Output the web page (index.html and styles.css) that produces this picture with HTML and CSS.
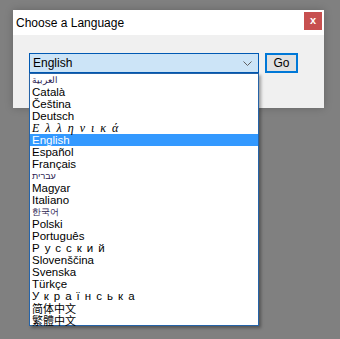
FILE: index.html
```html
<!DOCTYPE html>
<html lang="en">
<head>
    <meta charset="UTF-8">
    <title>Choose a Language</title>
    <link rel="stylesheet" href="styles.css">
</head>
<body>
<div class="dialog">
    <div class="titlebar">
        <span class="title">Choose a Language</span>
        <span class="close">x</span>
    </div>
    <div class="content">
        <div class="controls">
            <div class="combo">
                <span>English</span>
                <svg class="chevron" width="9" height="5" viewBox="0 0 9 5"><polyline points="0.5,0.5 4.5,4.5 8.5,0.5" fill="none" stroke="#606060" stroke-width="1"/></svg>
            </div>
            <div class="go">Go</div>
        </div>
        <ul class="list">
            <li class="small" lang="ar">العربية</li>
            <li>Català</li>
            <li>Čeština</li>
            <li>Deutsch</li>
            <li class="greek">Ελληνικά</li>
            <li class="selected">English</li>
            <li>Español</li>
            <li>Français</li>
            <li class="small" lang="he">עברית</li>
            <li>Magyar</li>
            <li>Italiano</li>
            <li class="small" lang="ko">한국어</li>
            <li>Polski</li>
            <li>Português</li>
            <li class="wide">Русский</li>
            <li>Slovenščina</li>
            <li>Svenska</li>
            <li>Türkçe</li>
            <li class="wide">Українська</li>
            <li class="cjk">简体中文</li>
            <li class="cjk">繁體中文</li>
        </ul>
    </div>
</div>
</body>
</html>
```

FILE: styles.css
```css
html { height: 100%; }
body {
    box-sizing: border-box;
    min-height: 100%;
    margin: 0;
    padding: 10px 0 0 13px;
    background: #808080;
    font-family: 'Liberation Sans', Arial, sans-serif;
    color: #000;
}
.dialog {
    position: relative;
    width: 311px;
    height: 98px;
    background: #f0f0f0;
    box-shadow: 0 0 8px rgba(0, 0, 0, 0.22);
    display: flex;
    flex-direction: column;
}
.titlebar {
    height: 25px;
    background: #fff;
    display: flex;
    align-items: center;
    justify-content: space-between;
    padding: 0 2px 0 3px;
}
.title { font-size: 12px; }
.close {
    width: 18px;
    height: 18px;
    margin-top: -4px;
    background: #c75050;
    color: #fff;
    font-weight: bold;
    font-size: 11px;
    line-height: 16px;
    text-align: center;
}
.content {
    flex: 1;
    padding: 18px 0 0 16px;
}
.controls { display: flex; gap: 6px; }
.combo {
    box-sizing: border-box;
    width: 230px;
    height: 20px;
    border: 1px solid #0059b3;
    background: #cce4f7;
    display: flex;
    align-items: center;
    justify-content: space-between;
    padding: 0 6px 0 3px;
    font-size: 12px;
}
.chevron { display: block; }
.go {
    box-sizing: border-box;
    width: 33px;
    height: 20px;
    border: 2px solid #0078d7;
    background: #e1e1e1;
    font-size: 12px;
    line-height: 16px;
    text-align: center;
}
.list {
    position: absolute;
    z-index: 2;
    left: 16px;
    top: 63px;
    box-sizing: border-box;
    width: 230px;
    height: 253px;
    margin: 0;
    padding: 0;
    list-style: none;
    background: #fff;
    border: 1px solid #2563a8;
    box-shadow: 2px 2px 3px rgba(0, 0, 0, 0.35);
}
.list li {
    height: 12px;
    line-height: 12px;
    padding-left: 2px;
    font-size: 11.5px;
    white-space: nowrap;
}
.list .selected { background: #3399ff; color: #fff; }
.list .small { font-size: 9px; color: #2a1a50; }
.list .greek {
    font-family: 'Liberation Serif', serif;
    font-style: italic;
    font-size: 12px;
    letter-spacing: 6px;
}
.list .wide { font-size: 11.5px; letter-spacing: 5px; }
.list .cjk { font-family: 'Noto Sans CJK SC', sans-serif; font-size: 11px; }
```
